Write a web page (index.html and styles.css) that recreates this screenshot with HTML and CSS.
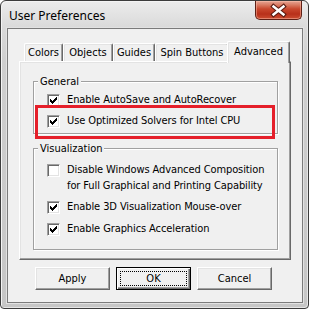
FILE: index.html
```html
<!DOCTYPE html>
<html>
<head>
<meta charset="utf-8">
<link rel="stylesheet" href="styles.css">
</head>
<body>
<div class="window">
  <div class="titlebar">
    <span class="title">User Preferences</span>
    <div class="close">
      <svg width="45" height="17" viewBox="0 0 45 17">
        <path d="M17.5 4.5 L27.5 12.5 M27.5 4.5 L17.5 12.5" stroke="#5a1c12" stroke-width="4.6" stroke-linecap="square" fill="none"/>
        <path d="M17.5 4.5 L27.5 12.5 M27.5 4.5 L17.5 12.5" stroke="#ffffff" stroke-width="2.4" stroke-linecap="square" fill="none"/>
      </svg>
    </div>
  </div>
  <div class="client">
    <div class="tabs">
      <div class="tab w-colors">Colors</div>
      <div class="tab w-objects">Objects</div>
      <div class="tab w-guides">Guides</div>
      <div class="tab w-spin">Spin Buttons</div>
      <div class="tab active w-adv">Advanced</div>
    </div>
    <div class="panel">
      <div class="group general">
        <span class="legend">General</span>
        <div class="row r1"><span class="box"><svg width="7" height="7" viewBox="0 0 7 7" shape-rendering="crispEdges"><path d="M0 2h1v3h-1zM1 3h1v3h-1zM2 4h1v3h-1zM3 3h1v3h-1zM4 2h1v3h-1zM5 1h1v3h-1zM6 0h1v3h-1z" fill="#000"/></svg></span><span class="label">Enable AutoSave and AutoRecover</span></div>
        <div class="row r2 highlight"><span class="box"><svg width="7" height="7" viewBox="0 0 7 7" shape-rendering="crispEdges"><path d="M0 2h1v3h-1zM1 3h1v3h-1zM2 4h1v3h-1zM3 3h1v3h-1zM4 2h1v3h-1zM5 1h1v3h-1zM6 0h1v3h-1z" fill="#000"/></svg></span><span class="label">Use Optimized Solvers for Intel CPU</span></div>
      </div>
      <div class="group visual">
        <span class="legend">Visualization</span>
        <div class="row r3"><span class="box"></span><span class="label">Disable Windows Advanced Composition<br>for Full Graphical and Printing Capability</span></div>
        <div class="row r4"><span class="box"><svg width="7" height="7" viewBox="0 0 7 7" shape-rendering="crispEdges"><path d="M0 2h1v3h-1zM1 3h1v3h-1zM2 4h1v3h-1zM3 3h1v3h-1zM4 2h1v3h-1zM5 1h1v3h-1zM6 0h1v3h-1z" fill="#000"/></svg></span><span class="label">Enable 3D Visualization Mouse-over</span></div>
        <div class="row r5"><span class="box"><svg width="7" height="7" viewBox="0 0 7 7" shape-rendering="crispEdges"><path d="M0 2h1v3h-1zM1 3h1v3h-1zM2 4h1v3h-1zM3 3h1v3h-1zM4 2h1v3h-1zM5 1h1v3h-1zM6 0h1v3h-1z" fill="#000"/></svg></span><span class="label">Enable Graphics Acceleration</span></div>
      </div>
    </div>
    <div class="buttons">
      <div class="btn">Apply</div>
      <div class="btn default"><span class="focus">OK</span></div>
      <div class="btn">Cancel</div>
    </div>
  </div>
</div>
</body>
</html>
```
FILE: styles.css
```css
* { box-sizing: border-box; }
html, body { margin: 0; padding: 0; }
body {
  width: 309px;
  height: 309px;
  overflow: hidden;
  background: #ffffff;
  font-family: "DejaVu Sans", sans-serif;
  font-stretch: condensed;
  font-size: 11px;
  color: #000;
}
.window {
  width: 309px;
  height: 309px;
  border: 1px solid #3c3c3c;
  border-radius: 6px 6px 4px 4px;
  background: linear-gradient(#ececec 0px, #dadada 26px, #cfcfcf 60px, #c6c6c6 100%);
  box-shadow: inset 1px 1px 0 #f4f4f4, inset -1px -1px 0 #e6e6e6;
  display: flex;
  flex-direction: column;
  padding: 0 5px 5px 6px;
}
.titlebar {
  height: 27px;
  display: flex;
  align-items: flex-start;
}
.title {
  font-family: "Noto Sans", "Open Sans", sans-serif;
  font-stretch: normal;
  font-size: 12px;
  line-height: 16px;
  margin: 7px 0 0 2px;
  color: #000;
}
.close {
  margin-left: auto;
  margin-right: 1px;
  width: 47px;
  height: 19px;
  border: 1px solid #5e2016;
  border-top: none;
  border-radius: 0 0 5px 5px;
  background: linear-gradient(#e7a595 0px, #d97a62 4px, #c9472d 8px, #b8301a 13px, #c8472c 17px, #d9664a 19px);
  box-shadow: inset 0 0 0 1px rgba(255, 200, 180, 0.45);
  display: flex;
  align-items: center;
  justify-content: center;
}
.close svg { display: block; }
.client {
  flex: 1;
  border: 1px solid #7b7b7b;
  box-shadow: 0 0 0 1px #e2e2e2;
  background: #f0f0f0;
  padding: 12px 10px 0 11px;
  display: flex;
  flex-direction: column;
}
.tabs {
  display: flex;
  align-items: flex-end;
  height: 20px;
  padding-left: 5px;
  position: relative;
  z-index: 1;
}
.tab {
  height: 18px;
  border-top: 1px solid #ffffff;
  border-left: 1px solid #ffffff;
  border-right: 1px solid #696969;
  border-radius: 2px 2px 0 0;
  box-shadow: inset -1px 0 0 #a0a0a0, inset 1px 1px 0 #e3e3e3;
  background: #f0f0f0;
  text-align: center;
  line-height: 16px;
  padding-top: 1px;
  white-space: nowrap;
}
.w-colors { width: 39px; }
.w-objects { width: 50px; }
.w-guides { width: 42px; }
.w-spin { width: 74px; }
.w-adv { width: 59px; }
.tab.active {
  width: 63px;
  height: 22px;
  margin: 0 -2px -2px -2px;
  padding-top: 2px;
  box-shadow: inset -1px 0 0 #a0a0a0, inset 1px 1px 0 #e3e3e3;
  position: relative;
  z-index: 2;
}
.panel {
  width: 272px;
  border-top: 1px solid #ffffff;
  border-left: 1px solid #ffffff;
  border-right: 1px solid #696969;
  border-bottom: 1px solid #696969;
  box-shadow: inset -1px -1px 0 #a0a0a0, inset 1px 1px 0 #e3e3e3;
  padding: 19px 12px 9px 13px;
  display: flex;
  flex-direction: column;
}
.group {
  border: 1px solid #a0a0a0;
  box-shadow: inset 1px 1px 0 #ffffff, 1px 1px 0 #ffffff;
  display: flex;
  flex-direction: column;
  padding: 0 0 0 13px;
}
.general { padding-bottom: 4px; }
.visual { margin-top: 14px; padding-bottom: 12px; }
.legend {
  align-self: flex-start;
  margin: -8px 0 0 -9px;
  padding: 0 2px;
  background: #f0f0f0;
  line-height: 15px;
  position: relative;
}
.row {
  display: flex;
  align-items: flex-start;
  line-height: 16px;
  position: relative;
}
.r1 { margin-top: 3px; }
.r2 { margin-top: 5px; }
.r3 { margin-top: 6px; }
.r4 { margin-top: 5px; }
.r5 { margin-top: 6px; }
.box {
  flex: none;
  width: 13px;
  height: 13px;
  margin: 2px 7px 0 0;
  background: #ffffff;
  border-top: 1px solid #a0a0a0;
  border-left: 1px solid #a0a0a0;
  border-right: 1px solid #ffffff;
  border-bottom: 1px solid #ffffff;
  box-shadow: inset 1px 1px 0 #696969, inset -1px -1px 0 #e3e3e3;
  display: flex;
  align-items: center;
  justify-content: center;
}
.box svg { display: block; }
.label { white-space: nowrap; letter-spacing: -0.1px; }
.highlight::after {
  content: "";
  position: absolute;
  left: -12px;
  top: -8px;
  width: 234px;
  height: 28px;
  border: 3px solid #e51f2a;
}
.buttons {
  display: flex;
  gap: 6px;
  margin-top: 7px;
  padding-left: 16px;
}
.btn {
  width: 75px;
  height: 23px;
  border-top: 1px solid #ffffff;
  border-left: 1px solid #ffffff;
  border-right: 1px solid #696969;
  border-bottom: 1px solid #696969;
  box-shadow: inset -1px -1px 0 #a0a0a0, inset 1px 1px 0 #e3e3e3;
  background: #f0f0f0;
  display: flex;
  align-items: center;
  justify-content: center;
  line-height: 14px;
}
.btn.default {
  border: 1px solid #000000;
  box-shadow: inset 1px 1px 0 #ffffff, inset -1px -1px 0 #696969, inset -2px -2px 0 #a0a0a0;
  padding: 3px;
}
.focus {
  flex: 1;
  align-self: stretch;
  border: 1px dotted #000000;
  display: flex;
  align-items: center;
  justify-content: center;
}
```
